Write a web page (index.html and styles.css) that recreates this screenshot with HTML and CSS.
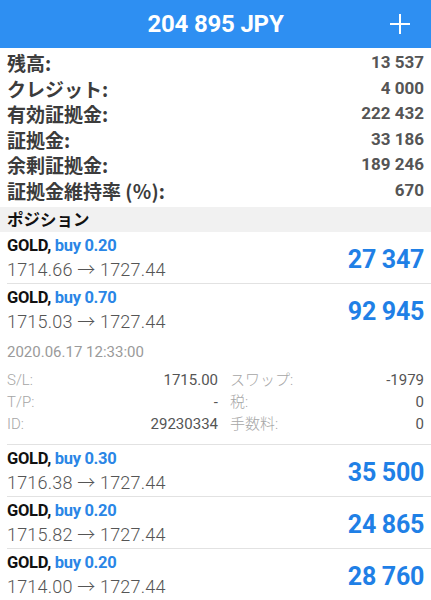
FILE: index.html
```html
<!DOCTYPE html>
<html lang="ja">
<head>
<meta charset="utf-8">
<link rel="stylesheet" href="styles.css">
</head>
<body>
<header class="topbar">
  <div class="balance">204 895 JPY</div>
  <svg class="plus" width="22" height="22" viewBox="0 0 22 22"><path d="M11 1V21M1 11H21" stroke="#fff" stroke-width="2" fill="none"/></svg>
</header>
<section class="summary">
  <div class="srow"><span class="label">残高:</span><span class="value">13 537</span></div>
  <div class="srow"><span class="label">クレジット:</span><span class="value">4 000</span></div>
  <div class="srow"><span class="label">有効証拠金:</span><span class="value">222 432</span></div>
  <div class="srow"><span class="label">証拠金:</span><span class="value">33 186</span></div>
  <div class="srow"><span class="label">余剰証拠金:</span><span class="value">189 246</span></div>
  <div class="srow"><span class="label">証拠金維持率 (％):</span><span class="value">670</span></div>
</section>
<div class="section-title">ポジション</div>
<ul class="positions">
  <li class="pos">
    <div class="pos-main">
      <div class="pos-info">
        <div class="pos-title"><span class="sym">GOLD,</span> <span class="side">buy 0.20</span></div>
        <div class="pos-prices">1714.66 → 1727.44</div>
      </div>
      <div class="pos-profit">27 347</div>
    </div>
  </li>
  <li class="pos">
    <div class="pos-main">
      <div class="pos-info">
        <div class="pos-title"><span class="sym">GOLD,</span> <span class="side">buy 0.70</span></div>
        <div class="pos-prices">1715.03 → 1727.44</div>
      </div>
      <div class="pos-profit">92 945</div>
    </div>
    <div class="pos-details">
      <div class="pos-date">2020.06.17 12:33:00</div>
      <div class="dgrid">
        <span class="dlabel">S/L:</span><span class="dvalue">1715.00</span>
        <span class="dlabel dlabel-r">スワップ:</span><span class="dvalue">-1979</span>
        <span class="dlabel">T/P:</span><span class="dvalue">-</span>
        <span class="dlabel dlabel-r">税:</span><span class="dvalue">0</span>
        <span class="dlabel">ID:</span><span class="dvalue">29230334</span>
        <span class="dlabel dlabel-r">手数料:</span><span class="dvalue">0</span>
      </div>
    </div>
  </li>
  <li class="pos">
    <div class="pos-main">
      <div class="pos-info">
        <div class="pos-title"><span class="sym">GOLD,</span> <span class="side">buy 0.30</span></div>
        <div class="pos-prices">1716.38 → 1727.44</div>
      </div>
      <div class="pos-profit">35 500</div>
    </div>
  </li>
  <li class="pos">
    <div class="pos-main">
      <div class="pos-info">
        <div class="pos-title"><span class="sym">GOLD,</span> <span class="side">buy 0.20</span></div>
        <div class="pos-prices">1715.82 → 1727.44</div>
      </div>
      <div class="pos-profit">24 865</div>
    </div>
  </li>
  <li class="pos">
    <div class="pos-main">
      <div class="pos-info">
        <div class="pos-title"><span class="sym">GOLD,</span> <span class="side">buy 0.20</span></div>
        <div class="pos-prices">1714.00 → 1727.44</div>
      </div>
      <div class="pos-profit">28 760</div>
    </div>
  </li>
</ul>
</body>
</html>
```
FILE: styles.css
```css
* { box-sizing: border-box; }
html, body { margin: 0; padding: 0; background: #fff; }
body {
  font-family: Roboto, "Noto Sans CJK JP", sans-serif;
  color: #222;
  width: 431px;
  overflow: hidden;
}
.topbar {
  height: 48px;
  background: #2e8ff2;
  display: flex;
  align-items: center;
  justify-content: center;
  position: relative;
}
.balance {
  color: #fff;
  font-weight: 700;
  font-size: 24px;
  letter-spacing: -0.2px;
}
.plus {
  position: absolute;
  right: 20px;
  top: 13px;
}
.summary {
  padding: 2px 7px 3px 7px;
}
.srow {
  display: flex;
  justify-content: space-between;
  height: 25.6px;
  line-height: 25.6px;
  font-weight: 700;
  font-size: 18px;
}
.label { color: #3c3c3c; font-family: "Noto Sans CJK JP", Roboto, sans-serif; font-size: 19px; }
.value { color: #555; font-size: 17px; }
.section-title {
  background: #f1f1f1;
  height: 25px;
  line-height: 25px;
  padding-left: 7px;
  font-family: "Noto Sans CJK JP", sans-serif;
  font-weight: 700;
  font-size: 16.5px;
  color: #111;
}
.positions { list-style: none; margin: 0; padding: 0; }
.pos {
  margin-left: 7px;
  padding-right: 7px;
  border-bottom: 1px solid #e2e2e2;
}
.pos-main {
  height: 51px;
  display: flex;
  justify-content: space-between;
  align-items: center;
}
.pos-title {
  height: 22px;
  line-height: 22px;
  margin-top: 3px;
  font-weight: 700;
  font-size: 16.5px;
  letter-spacing: -0.3px;
}
.sym { color: #111; }
.side { color: #2a86e6; }
.pos-prices {
  height: 26px;
  line-height: 26px;
  font-weight: 300;
  font-size: 18px;
  color: #555;
  letter-spacing: 0.2px;
}
.pos-profit {
  font-weight: 700;
  font-size: 25px;
  color: #1f80e6;
  letter-spacing: -0.3px;
  padding-top: 4px;
}
.pos-details {
  padding: 6px 0 9px 0;
  font-size: 15px;
}
.pos-date {
  height: 22px;
  line-height: 22px;
  color: #9a9a9a;
}
.dgrid {
  margin-top: 6px;
  display: grid;
  grid-template-columns: 60px 151px 92px 1fr;
  grid-auto-rows: 22px;
  line-height: 22px;
}
.dlabel { color: #a6a6a6; font-weight: 300; }
.dlabel-r { padding-left: 12px; }
.dvalue { color: #555; text-align: right; }
```
